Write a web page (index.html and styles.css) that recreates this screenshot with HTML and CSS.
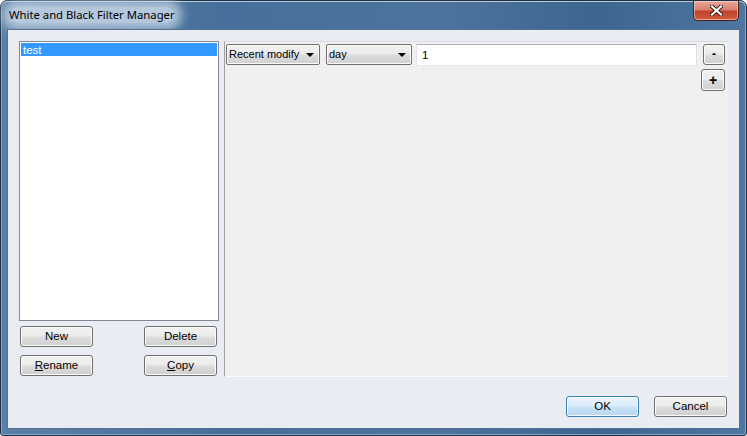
FILE: index.html
```html
<!DOCTYPE html>
<html>
<head>
<meta charset="utf-8" />
<title>White and Black Filter Manager</title>
<link rel="stylesheet" href="styles.css">
</head>
<body>
<div class="window">
  <div class="titlebar">
    <span class="title">White and Black Filter Manager</span>
    <button class="close">
      <svg width="13" height="11" viewBox="0 0 13 11">
        <path d="M2 1.5 L11 9.5 M11 1.5 L2 9.5" stroke="#3a1510" stroke-width="4" stroke-linecap="square" fill="none" />
        <path d="M2 1.5 L11 9.5 M11 1.5 L2 9.5" stroke="#fff" stroke-width="2.2" stroke-linecap="square" fill="none" />
      </svg>
    </button>
  </div>
  <div class="client">
    <div class="main">
      <div class="left">
        <div class="list">
          <div class="item selected">test</div>
        </div>
        <div class="btn-row row1"><button class="btn">New</button><button class="btn">Delete</button></div>
        <div class="btn-row row2"><button class="btn"><u>R</u>ename</button><button class="btn"><u>C</u>opy</button></div>
      </div>
      <div class="panel">
        <div class="filter-row">
          <div class="combo combo-field"><span>Recent modify</span><i class="arrow"></i></div>
          <div class="combo combo-unit"><span>day</span><i class="arrow"></i></div>
          <input type="text" class="value" value="1" />
          <button class="btn small minus">-</button>
        </div>
        <div class="add-row"><button class="btn small plus">+</button></div>
      </div>
    </div>
    <div class="footer">
      <button class="btn default">OK</button><button class="btn">Cancel</button>
    </div>
  </div>
</div>
</body>
</html>
```

FILE: styles.css
```css
*{margin:0; padding:0; box-sizing:border-box;}
body{
	width:747px;
	height:436px;
	overflow:hidden;
	background:#fff;
	font-family:"Liberation Sans", Arial, sans-serif;
	font-size:11px;
	color:#000;
}
.window{
	width:747px;
	height:436px;
	display:flex;
	flex-direction:column;
	border:1px solid #1d3047;
	border-radius:7px 7px 3px 3px;
	background:linear-gradient(90deg, #5b7fa6 0%, #46709b 30%, #4b739d 60%, #3d668f 80%, #4d76a0 100%);
	box-shadow:inset 0 1px 0 #b9cbdd, inset 1px 0 0 #8aa6c3, inset -1px 0 0 #8aa6c3, inset 0 -1px 0 #8aa6c3;
}
/* title */
.titlebar{
	height:28px;
	display:flex;
	justify-content:space-between;
	align-items:flex-start;
	padding-left:8px;
}
.title{
	margin-top:6px;
	font-family:"Noto Sans", "Open Sans", sans-serif;
	font-size:11.3px;
	line-height:16px;
	color:#000;
	background:rgba(206,220,234,0.8);
	border-radius:8px;
	box-shadow:0 0 10px 7px rgba(206,220,234,0.75);
}
.close{
	width:46px;
	height:20px;
	margin-right:7px;
	border:1px solid #4a1c16;
	border-top:none;
	border-radius:0 0 5px 5px;
	background:linear-gradient(#e9a99b 0%, #d88170 45%, #c2412d 55%, #cf5d3f 100%);
	box-shadow:inset 0 0 0 1px rgba(255,220,210,0.6);
	display:flex;
	align-items:center;
	justify-content:center;
}
/* client area */
.client{
	flex:1;
	margin:0 6px 6px 6px;
	border:1px solid #56718f;
	background:#e9edf3;
	padding:11px 11px 11px 11px;
	display:flex;
	flex-direction:column;
}
.main{
	height:336px;
	display:flex;
	gap:5px;
}
.left{
	width:200px;
	display:flex;
	flex-direction:column;
}
.list{
	height:280px;
	border:1px solid #828790;
	background:#fff;
	padding:1px;
}
.item{
	height:13px;
	line-height:14px;
	padding-left:2px;
	font-size:11.5px;
}
.selected{
	background:#3399ff;
	color:#fff;
}
.btn-row{
	display:flex;
	justify-content:space-between;
	padding:0 2px 0 1px;
}
.row1{margin-top:5px;}
.row2{margin-top:8px;}
.btn{
	width:73px;
	height:21px;
	border:1px solid #707070;
	border-radius:3px;
	background:linear-gradient(#f2f2f2 0%, #ebebeb 49%, #dddddd 51%, #cfcfcf 100%);
	box-shadow:inset 0 0 0 1px #fbfbfb;
	font-family:"Liberation Sans", Arial, sans-serif;
	font-size:11.5px;
	color:#000;
	text-align:center;
	line-height:17px;
}
.btn u{text-decoration:underline;}
/* filter panel */
.panel{
	flex:1;
	background:#f0f0f0;
	border-left:1px solid #a0a0a0;
	border-top:1px solid #d6dbe2;
	border-bottom:1px solid #fbfcfd;
	padding:2px 3px 0 1px;
}
.filter-row{
	display:flex;
	align-items:flex-start;
}
.combo{
	height:21px;
	border:1px solid #707070;
	border-radius:2px;
	background:linear-gradient(#f2f2f2 0%, #ebebeb 49%, #dddddd 51%, #cfcfcf 100%);
	box-shadow:inset 0 0 0 1px #fbfbfb;
	display:flex;
	align-items:center;
	justify-content:space-between;
	padding:0 5px 0 2px;
	line-height:19px;
	font-size:11px;
}
.combo-field{width:94px;}
.combo-unit{width:86px; margin-left:6px;}
.arrow{
	width:0;
	height:0;
	border-left:4px solid transparent;
	border-right:4px solid transparent;
	border-top:4px solid #000;
	margin-top:1px;
}
.value{
	width:281px;
	height:22px;
	margin-left:4px;
	border:1px solid #e2e3ea;
	border-top-color:#abadb3;
	border-bottom-color:#e3e9ef;
	border-right-color:#dbdfe6;
	background:#fff;
	padding-left:5px;
	font-family:"Liberation Sans", Arial, sans-serif;
	font-size:11.5px;
	outline:none;
}
.small{
	width:22px;
	font-weight:bold;
	font-size:12px;
}
.minus{margin-left:6px;}
.add-row{
	display:flex;
	justify-content:flex-end;
	margin-top:3px;
}
.plus{
	width:24px;
	height:22px;
	line-height:18px;
	font-size:14px;
}
/* footer */
.footer{
	margin-top:19px;
	display:flex;
	justify-content:flex-end;
	gap:15px;
	padding-right:1px;
}
.default{
	border-color:#3c7fb1;
	background:linear-gradient(#eaf4fc 0%, #dcecfa 49%, #c7e1f6 51%, #b9d7f1 100%);
	box-shadow:inset 0 0 0 1px #f4faff;
}
```
